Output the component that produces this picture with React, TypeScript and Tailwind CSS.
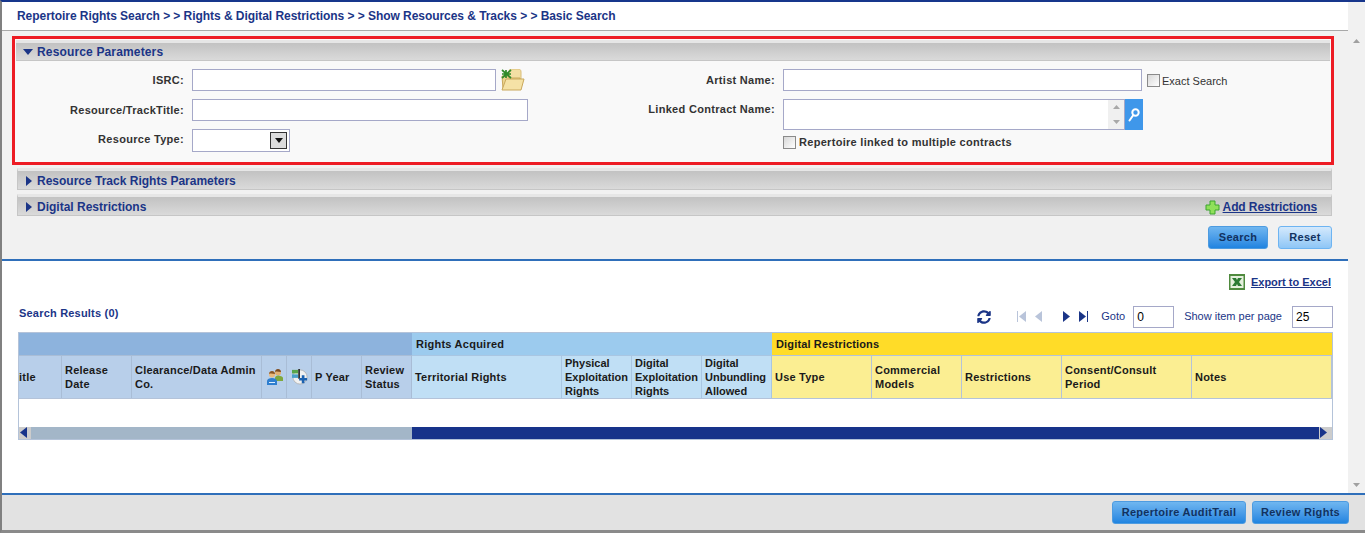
import { FaSyncAlt } from 'react-icons/fa';

const navy = 'text-[#1b3587]';

const groupCols = 'grid grid-cols-[43px_70px_130px_25px_25px_50px_50px_150px_70px_70px_70px_100px_90px_100px_130px_140px]';

function FolderIcon() {
  return (
    <svg width="24" height="22" viewBox="0 0 24 22" className="shrink-0">
      <path d="M8 2c0-1 1-2 2-2h7c2 0 3 1 3 3v8H8z" fill="#f3dfa4" stroke="#d9bd78" />
      <path d="M1 7h6l1 2h11v11H2z" fill="#ecd48e" stroke="#c9a85c" />
      <path d="M5 10h18l-3 11H1z" fill="#f5e2a6" stroke="#c9a85c" />
      <path d="M1 1l9 8M10 1L1 9M1 5h9M5 1v8" stroke="#2f8a2a" strokeWidth="1.7" />
    </svg>
  );
}

function PlusIcon() {
  return (
    <svg width="15" height="15" viewBox="0 0 15 15">
      <path d="M5 1h5v4h4v5h-4v4H5v-4H1V5h4z" fill="#8fe05a" stroke="#3da52f" strokeLinejoin="round" />
    </svg>
  );
}

function ExcelIcon() {
  return (
    <svg width="16" height="16" viewBox="0 0 16 16">
      <rect width="16" height="16" fill="#4f8a3e" />
      <rect x="1.500" y="2" width="13" height="12" fill="#e4efdc" />
      <path d="M3 4h4l1 2 1-2h4l-3 4 3 4H9L8 10l-1 2H3l3-4z" fill="#2c7a33" />
    </svg>
  );
}

function UsersIcon() {
  return (
    <svg width="16" height="16" viewBox="0 0 16 16" className="ml-[2px]">
      <circle cx="11" cy="3.500" r="3" fill="#e3b071" />
      <path d="M8 3c0-2 1.500-3 3-3s3 1 3 3c-2 0-4-1-6 0z" fill="#7a4a22" />
      <path d="M8 12V9c0-1.500 1.500-2.500 3-2.500S16 7.500 16 9v3z" fill="#7fa83c" />
      <circle cx="5" cy="5.500" r="3" fill="#eab97c" />
      <path d="M2 5c0-2 1.500-3 3-3s3 1 3 3c-2 0-4-1-6 0z" fill="#8a5526" />
      <path d="M0 16v-4c0-2 2.500-3 5-3s5 1 5 3v4z" fill="#2f7fd0" />
      <rect x="2" y="13" width="6" height="1" fill="#dff0ff" />
    </svg>
  );
}

function AddColumnsIcon() {
  return (
    <svg width="16" height="16" viewBox="0 0 18 18" className="ml-[2px]">
      <circle cx="9" cy="9" r="8" fill="#f1f1f1" stroke="#b5b5b5" />
      <rect x="0" y="1" width="7" height="4" fill="#58a64a" />
      <rect x="0" y="6" width="7" height="4" fill="#4aa0c8" />
      <rect x="7" y="0" width="2" height="11" fill="#333" />
      <path d="M11 7h3v3h3v3h-3v3h-3v-3H8v-3h3z" fill="#1c62b0" />
    </svg>
  );
}

function PagerArrow({ dir, bar, muted }: { dir: 'left' | 'right'; bar?: boolean; muted?: boolean }) {
  const fill = muted ? '#b9c4da' : '#1b3587';
  return (
    <svg width="10" height="11" viewBox="0 0 10 11">
      {dir === 'left' ? (
        <>
          {bar && <rect x="0" y="0" width="1" height="11" fill={fill} />}
          <path d="M9 0v11L2 5.500z" fill={fill} />
        </>
      ) : (
        <>
          <path d="M1 0v11l7-5.500z" fill={fill} />
          {bar && <rect x="9" y="0" width="1" height="11" fill={fill} />}
        </>
      )}
    </svg>
  );
}

function Checkbox() {
  return (
    <span className="box-border block h-[13px] w-[13px] shrink-0 border border-[#8a8a8a] bg-gradient-to-br from-[#d8d8d8] to-[#ffffff]" />
  );
}

function SectionBar({ title, open, right }: { title: string; open?: boolean; right?: React.ReactNode }) {
  return (
    <div
      className={`box-border flex items-center border-b border-[#c6c6c6] border-t-[3px] border-t-[#e6e6e6] bg-gradient-to-b from-[#c2c2c2] to-[#dadada] ${
        open ? 'h-[21px] pl-[7px] pr-[16px]' : 'h-[22px] border-x border-x-[#c6c6c6] pl-[6px] pr-[14px] pt-[2px]'
      }`}
    >
      <svg width="10" height="10" viewBox="0 0 10 10" className="shrink-0">
        {open ? <path d="M0 2h10L5 8z" fill="#1b3587" /> : <path d="M2 0v10l6-5z" fill="#1b3587" />}
      </svg>
      <span className={`text-[12px] font-bold ${navy} ${open ? 'ml-[4px] tracking-[0.15px]' : 'ml-[3px]'}`}>{title}</span>
      {right}
    </div>
  );
}

function Button({ label, light, className }: { label: string; light?: boolean; className: string }) {
  return (
    <button
      className={`box-border h-[23px] rounded-[3px] border text-center text-[11px] font-bold tracking-[0.3px] text-[#12325f] ${
        light
          ? 'border-[#6db4f2] bg-gradient-to-b from-[#d4e9fc] to-[#8ec6f6]'
          : 'border-[#4d9be0] bg-gradient-to-b from-[#6fb6f0] to-[#1f84e0]'
      } ${className}`}
    >
      {label}
    </button>
  );
}

function Label({ children, className }: { children: string; className: string }) {
  return <span className={`shrink-0 text-right text-[11px] font-bold tracking-[0.3px] text-[#333333] ${className}`}>{children}</span>;
}

const fieldCls = 'box-border border border-[#a5a8c8] bg-white';

function HeadCell({ children, bg, border = 'border-[#a9bdd6]', tight }: { children?: React.ReactNode; bg: string; border?: string; tight?: boolean }) {
  return (
    <div className={`box-border flex h-[42px] items-center border-r pl-[3px] text-[11px] font-bold leading-[14px] text-[#1a1a1a] ${tight ? '' : 'tracking-[0.22px]'} ${bg} ${border}`}>
      <span>{children}</span>
    </div>
  );
}

export default function App() {
  return (
    <div className="box-border flex h-[533px] w-[1365px] flex-col overflow-hidden border-l-2 border-t-2 border-b-[3px] border-l-[#808080] border-t-[#17368c] border-b-[#8a8a8a] bg-white font-['Liberation_Sans',Arial,sans-serif]">
      <div className="flex min-h-0 flex-1">
        <div className="flex min-w-0 flex-1 flex-col">
          {/* breadcrumb */}
          <div className={`box-border flex h-[29px] items-center border-b border-[#a8a8a8] pl-[15px] text-[12px] font-bold tracking-[-0.05px] ${navy}`}>
            Repertoire Rights Search &gt; &gt; Rights &amp; Digital Restrictions &gt; &gt; Show Resources &amp; Tracks &gt; &gt; Basic Search
          </div>

          {/* search form */}
          <div className="box-border h-[230px] border-b-2 border-[#2f6fba] bg-[#f1f1f1] pt-[5px]">
            <div className="ml-[10px] box-border h-[129px] w-[1322px] border-[3px] border-[#ed1c24] bg-[#f9f9f9] p-px">
              <SectionBar title="Resource Parameters" open />
              <div className="flex pt-[8px]">
                <div className="w-[525px]">
                  <div className="flex h-[22px] items-center">
                    <Label className="w-[168px]">ISRC:</Label>
                    <input className={`${fieldCls} ml-[8px] h-[22px] w-[304px]`} />
                    <span className="ml-[5px]"><FolderIcon /></span>
                  </div>
                  <div className="mt-[8px] flex h-[22px] items-center">
                    <Label className="w-[168px]">Resource/TrackTitle:</Label>
                    <input className={`${fieldCls} ml-[8px] h-[22px] w-[336px]`} />
                  </div>
                  <div className="mt-[8px] flex h-[23px] items-center">
                    <Label className="mb-[2px] w-[168px]">Resource Type:</Label>
                    <div className={`${fieldCls} ml-[8px] flex h-[23px] w-[98px] items-center justify-end pr-[2px]`}>
                      <span className="box-border flex h-[17px] w-[17px] items-center justify-center border border-[#333333] bg-[#dcdcdc]">
                        <svg width="8" height="5" viewBox="0 0 8 5"><path d="M0 0h8L4 5z" fill="#111" /></svg>
                      </span>
                    </div>
                  </div>
                </div>
                <div className="ml-[51px]">
                  <div className="flex h-[22px] items-center">
                    <Label className="w-[183px]">Artist Name:</Label>
                    <input className={`${fieldCls} ml-[8px] h-[22px] w-[359px]`} />
                    <span className="ml-[5px]"><Checkbox /></span>
                    <span className="ml-[2px] mt-[3px] text-[11px] text-[#333333]">Exact Search</span>
                  </div>
                  <div className="mt-[8px] flex items-start">
                    <Label className="mt-[2px] w-[183px]">Linked Contract Name:</Label>
                    <div className={`${fieldCls} ml-[8px] flex h-[31px] w-[342px] justify-end`}>
                      <div className="flex w-[16px] flex-col items-center justify-between bg-[#f0f0f0] py-[5px]">
                        <svg width="7" height="4" viewBox="0 0 7 4"><path d="M0 4h7L3.500 0z" fill="#a8a8a8" /></svg>
                        <svg width="7" height="4" viewBox="0 0 7 4"><path d="M0 0h7L3.500 4z" fill="#a8a8a8" /></svg>
                      </div>
                    </div>
                    <button className="flex h-[31px] w-[18px] items-center justify-center bg-[#3f97ea]">
                      <svg width="12" height="14" viewBox="0 0 12 14" fill="none" stroke="#ffffff" strokeWidth="2">
                        <circle cx="7.500" cy="4.500" r="3.200" />
                        <path d="M5 7.500l-3.500 5" strokeLinecap="round" />
                      </svg>
                    </button>
                  </div>
                  <div className="ml-[191px] mt-[4px] flex items-center">
                    <Checkbox />
                    <span className="ml-[3px] text-[11px] font-bold tracking-[0.3px] text-[#333333]">Repertoire linked to multiple contracts</span>
                  </div>
                </div>
              </div>
            </div>

            <div className="ml-[15px] mt-[3px] w-[1315px]">
              <SectionBar title="Resource Track Rights Parameters" />
              <div className="mt-[4px]">
                <SectionBar
                  title="Digital Restrictions"
                  right={
                    <span className="ml-auto flex items-center gap-[3px]">
                      <PlusIcon />
                      <span className={`text-[12px] font-bold tracking-[-0.1px] underline ${navy}`}>Add Restrictions</span>
                    </span>
                  }
                />
              </div>
              <div className="mt-[10px] flex justify-end gap-[10px]">
                <Button label="Search" className="w-[60px]" />
                <Button label="Reset" light className="w-[54px]" />
              </div>
            </div>
          </div>

          {/* results */}
          <div className="min-h-0 flex-1 bg-white">
            <div className="mr-[17px] mt-[13px] flex items-center justify-end gap-[6px]">
              <ExcelIcon />
              <span className={`text-[11px] font-bold underline ${navy}`}>Export to Excel</span>
            </div>
            <div className="ml-[17px] mr-[15px] mt-[15px] flex h-[22px] items-start">
              <span className={`-mt-px text-[11px] font-bold tracking-[0.2px] ${navy}`}>Search Results (0)</span>
              <div className={`ml-auto flex items-center text-[11px] ${navy}`}>
                <FaSyncAlt className="mr-[26px] text-[14px] text-[#1b3587]" />
                <PagerArrow dir="left" bar muted />
                <span className="ml-[6px]"><PagerArrow dir="left" muted /></span>
                <span className="ml-[19px]"><PagerArrow dir="right" /></span>
                <span className="ml-[6px]"><PagerArrow dir="right" bar /></span>
                <span className="ml-[13px]">Goto</span>
                <input defaultValue="0" className={`${fieldCls} ml-[8px] h-[22px] w-[41px] pl-[3px] text-[12px] text-black`} />
                <span className="ml-[10px]">Show item per page</span>
                <input defaultValue="25" className={`${fieldCls} ml-[10px] h-[22px] w-[41px] pl-[3px] text-[12px] text-black`} />
              </div>
            </div>

            <div className="ml-[16px] mt-[4px] box-border w-[1315px] border border-[#b4c3d9]">
              <div className={groupCols}>
                <div className="col-span-7 h-[23px] border-b border-[#a9bdd6] bg-[#8db3dd]" />
                <div className="col-span-4 flex h-[23px] items-center border-b border-[#a9c6e2] bg-[#9ccbee] pl-[4px] pt-px text-[11px] font-bold tracking-[0.25px] text-[#1a1a1a]">Rights Acquired</div>
                <div className="col-span-5 flex h-[23px] items-center border-b border-[#b4c3d9] bg-[#ffdc28] pl-[4px] pt-px text-[11px] font-bold tracking-[0.15px] text-[#1a1a1a]">Digital Restrictions</div>

                <HeadCell bg="bg-[#b8cfea]"><span className="-ml-[3px]">itle</span></HeadCell>
                <HeadCell bg="bg-[#b8cfea]">Release Date</HeadCell>
                <HeadCell bg="bg-[#b8cfea]">Clearance/Data Admin Co.</HeadCell>
                <HeadCell bg="bg-[#b8cfea]"><UsersIcon /></HeadCell>
                <HeadCell bg="bg-[#b8cfea]"><AddColumnsIcon /></HeadCell>
                <HeadCell bg="bg-[#b8cfea]">P Year</HeadCell>
                <HeadCell bg="bg-[#b8cfea]">Review Status</HeadCell>
                <HeadCell bg="bg-[#c0dff5]" border="border-[#a9c6e2]">Territorial Rights</HeadCell>
                <HeadCell bg="bg-[#c0dff5]" border="border-[#a9c6e2]" tight>Physical Exploitation Rights</HeadCell>
                <HeadCell bg="bg-[#c0dff5]" border="border-[#a9c6e2]" tight>Digital Exploitation Rights</HeadCell>
                <HeadCell bg="bg-[#c0dff5]" border="border-[#a9c6e2]" tight>Digital Unbundling Allowed</HeadCell>
                <HeadCell bg="bg-[#fbee92]" border="border-[#b4c3d9]">Use Type</HeadCell>
                <HeadCell bg="bg-[#fbee92]" border="border-[#b4c3d9]">Commercial Models</HeadCell>
                <HeadCell bg="bg-[#fbee92]" border="border-[#b4c3d9]">Restrictions</HeadCell>
                <HeadCell bg="bg-[#fbee92]" border="border-[#b4c3d9]">Consent/Consult<br />Period</HeadCell>
                <HeadCell bg="bg-[#fbee92]" border="border-[#b4c3d9]">Notes</HeadCell>
              </div>
              <div className="h-[29px] border-t border-[#b4c3d9] bg-white" />
              <div className="flex h-[12px]">
                <div className="flex w-[12px] items-center bg-[#cccccc] pl-px">
                  <svg width="7" height="11" viewBox="0 0 7 11"><path d="M7 0v11L0 5.500z" fill="#17338a" /></svg>
                </div>
                <div className="w-[381px] bg-[#a3b6c8]" />
                <div className="flex-1 bg-[#17338a]" />
                <div className="flex w-[13px] items-center bg-[#cccccc] pl-px">
                  <svg width="7" height="11" viewBox="0 0 7 11"><path d="M0 0v11l7-5.500z" fill="#17338a" /></svg>
                </div>
              </div>
            </div>
          </div>
        </div>

        {/* page scrollbar */}
        <div className="flex w-[17px] shrink-0 flex-col items-center justify-between bg-[#f1f1f1] py-[6px]">
          <svg width="7" height="4" viewBox="0 0 7 4" className="mt-[31px]"><path d="M0 4h7L3.500 0z" fill="#a0a0a0" /></svg>
          <svg width="7" height="4" viewBox="0 0 7 4"><path d="M0 0h7L3.500 4z" fill="#a0a0a0" /></svg>
        </div>
      </div>

      {/* footer */}
      <div className="box-border flex h-[37px] items-center justify-end gap-[6px] border-t-2 border-[#2f6fba] bg-[#e2e2e2] pr-[16px]">
        <Button label="Repertoire AuditTrail" className="w-[134px]" />
        <Button label="Review Rights" className="w-[97px]" />
      </div>
    </div>
  );
}
